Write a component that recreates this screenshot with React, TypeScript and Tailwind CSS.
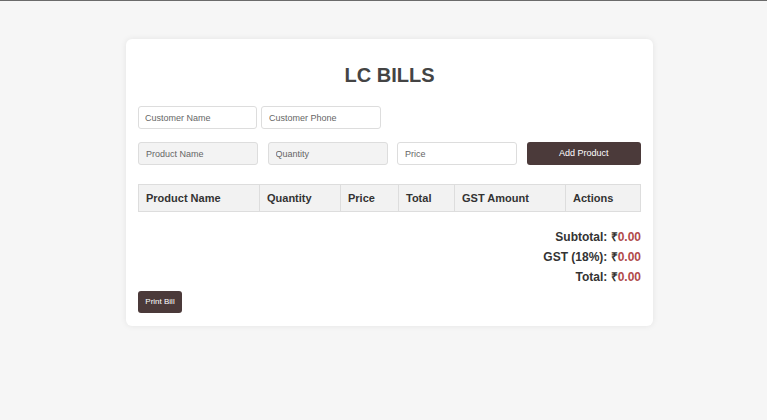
export default function App() {
  const headers = [
    { label: "Product Name", w: "w-[121px]" },
    { label: "Quantity", w: "w-[81px]" },
    { label: "Price", w: "w-[58px]" },
    { label: "Total", w: "w-[56px]" },
    { label: "GST Amount", w: "w-[111px]" },
    { label: "Actions", w: "" },
  ];

  return (
    <div className="min-h-[420px] w-full bg-[#f6f6f6] border-t border-[#6b6b6b] font-['Liberation_Sans',Arial,sans-serif] pt-[38px]">
      <div className="w-[527px] ml-[126px] bg-white rounded-md shadow-[0_0_6px_rgba(0,0,0,0.08)] px-3 pt-[24px] pb-[13px]">
        <h1 className="text-center text-[20px] font-bold text-[#444] leading-[24px]">LC BILLS</h1>

        <div className="flex gap-1 mt-[19px]">
          <input
            placeholder="Customer Name"
            className="w-[119px] h-[23px] border border-[#ddd] rounded-[3px] px-[6px] text-[9px] text-[#555] placeholder:text-[#666] bg-white outline-none"
          />
          <input
            placeholder="Customer Phone"
            className="w-[120px] h-[23px] border border-[#ddd] rounded-[3px] px-[7px] text-[9px] text-[#555] placeholder:text-[#666] bg-white outline-none"
          />
        </div>

        <div className="flex gap-[9.5px] mt-[13px]">
          <input
            placeholder="Product Name"
            className="w-[120px] h-[23px] border border-[#ddd] rounded-[3px] px-[7px] text-[9px] placeholder:text-[#666] bg-[#f3f3f3] outline-none"
          />
          <input
            placeholder="Quantity"
            className="w-[120px] h-[23px] border border-[#ddd] rounded-[3px] px-[7px] text-[9px] placeholder:text-[#666] bg-[#f3f3f3] outline-none"
          />
          <input
            placeholder="Price"
            className="w-[120px] h-[23px] border border-[#ddd] rounded-[3px] px-[7px] text-[9px] placeholder:text-[#666] bg-white outline-none"
          />
          <button className="flex-1 h-[23px] rounded-[3px] bg-[#4b3a3a] text-white text-[9px]">
            Add Product
          </button>
        </div>

        <table className="w-full mt-[19px] border-collapse">
          <thead>
            <tr className="bg-[#f2f2f2]">
              {headers.map((h) => (
                <th
                  key={h.label}
                  className={`${h.w} h-[27px] border border-[#ddd] text-left px-[7px] text-[11px] font-bold text-[#333]`}
                >
                  {h.label}
                </th>
              ))}
            </tr>
          </thead>
          <tbody />
        </table>

        <div className="mt-[19px] flex flex-col items-end gap-[7px] text-[12px] font-bold text-[#333] leading-[13px]">
          <p>
            Subtotal: ₹<span className="text-[#b04a4a]">0.00</span>
          </p>
          <p>
            GST (18%): ₹<span className="text-[#b04a4a]">0.00</span>
          </p>
          <p>
            Total: ₹<span className="text-[#b04a4a]">0.00</span>
          </p>
        </div>

        <button className="mt-[7px] h-[22px] w-[44px] rounded-[3px] bg-[#4b3a3a] text-white text-[8px]">
          Print Bill
        </button>
      </div>
    </div>
  );
}
